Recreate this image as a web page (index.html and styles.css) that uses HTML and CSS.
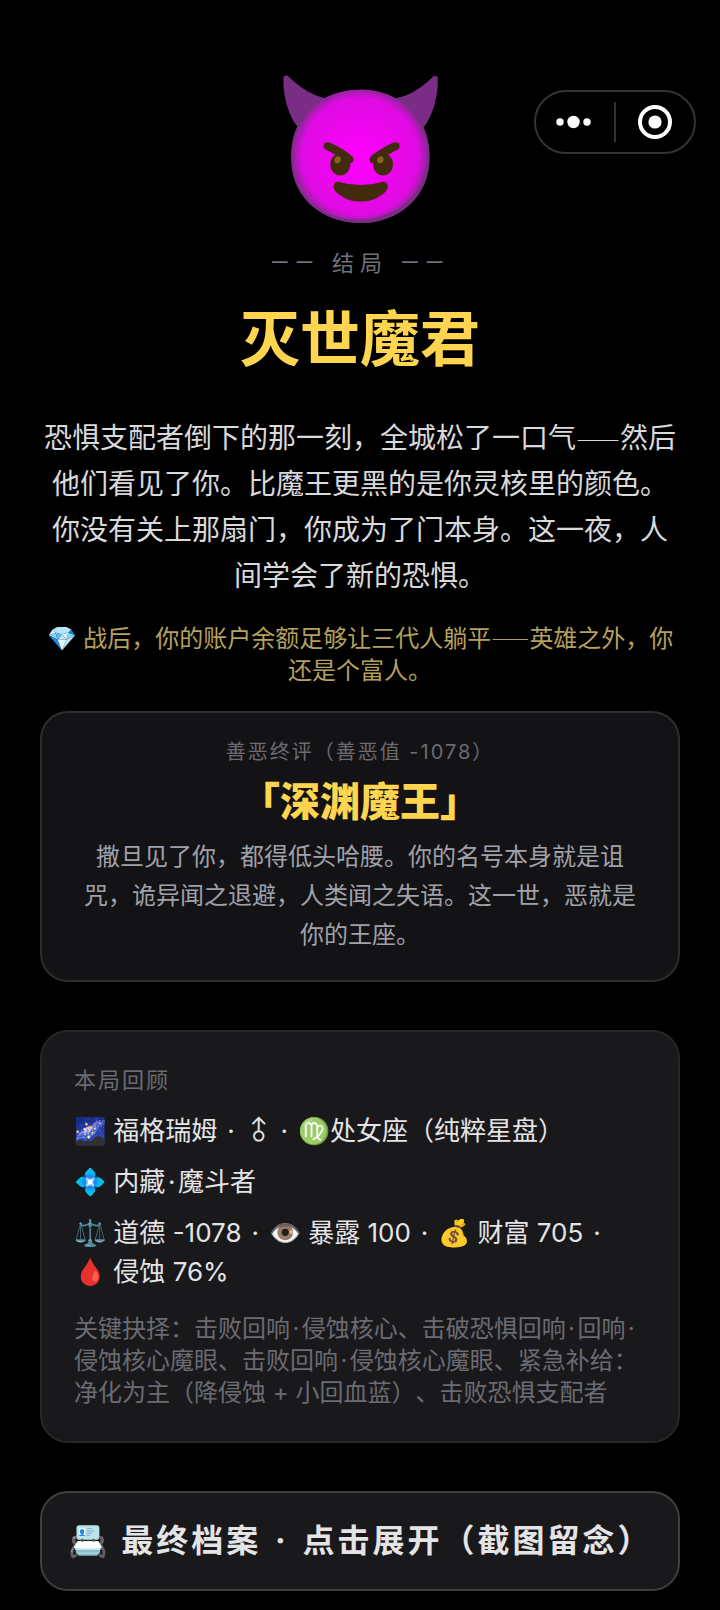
FILE: index.html
```
<!DOCTYPE html>
<html lang="zh-CN">
<head>
<meta charset="utf-8">
<meta name="viewport" content="width=device-width, initial-scale=1">
<title>灭世魔君</title>
<link rel="stylesheet" href="styles.css">
</head>
<body>
<nav class="capsule" aria-label="小程序">
  <button class="capsule-btn" type="button" aria-label="更多">
    <svg width="40" height="36" viewBox="0 0 40 36" fill="#fff"><circle cx="5" cy="18" r="3.7"/><circle cx="18.5" cy="18" r="6.2"/><circle cx="32" cy="18" r="3.7"/></svg>
  </button>
  <button class="capsule-btn" type="button" aria-label="关闭">
    <svg width="36" height="36" viewBox="0 0 36 36"><circle cx="18" cy="18" r="15" fill="none" stroke="#fff" stroke-width="4"/><circle cx="18" cy="18" r="6.6" fill="#fff"/></svg>
  </button>
</nav>
<main class="page">
  <div class="hero">😈</div>
  <p class="kicker"><span class="rule">——</span> 结局 <span class="rule">——</span></p>
  <h1 class="title">灭世魔君</h1>
  <p class="story">恐惧支配者倒下的那一刻，全城松了一口气<span class="dash">——</span>然后他们看见了你。比魔王更黑的是你灵核里的颜色。你没有关上那扇门，你成为了门本身。这一夜，人间学会了新的恐惧。</p>
  <p class="wealth">💎 战后，你的账户余额足够让三代人躺平<span class="dash">——</span>英雄之外，你还是个富人。</p>
  <section class="card verdict">
    <p class="verdict-label">善恶终评（善恶值 -1078）</p>
    <h2 class="verdict-title">「深渊魔王」</h2>
    <p class="verdict-text">撒旦见了你，都得低头哈腰。你的名号本身就是诅咒，诡异闻之退避，人类闻之失语。这一世，恶就是你的王座。</p>
  </section>
  <section class="card review">
    <h2 class="review-label">本局回顾</h2>
    <p class="review-line">🌌 福格瑞姆 <span class="dot">·</span> <span class="sex">♂</span> <span class="dot">·</span> ♍处女座（纯粹星盘）</p>
    <p class="review-line">💠 内藏<span class="dot">·</span>魔斗者</p>
    <p class="review-line"><span class="stat">⚖️ 道德 -1078</span> <span class="dot">·</span> <span class="stat">👁️ 暴露 100</span> <span class="dot">·</span> <span class="stat">💰 财富 705</span> <span class="dot">·</span> <span class="stat">🩸 侵蚀 76%</span></p>
    <p class="choices">关键抉择：击败回响<span class="dot">·</span>侵蚀核心、击破恐惧回响<span class="dot">·</span>回响<span class="dot">·</span><wbr>侵蚀核心魔眼、击败回响<span class="dot">·</span>侵蚀核心魔眼、紧急补给：净化为主（降侵蚀 + 小回血蓝）、击败恐惧支配者</p>
  </section>
  <button class="archive" type="button">📇 最终档案 <span class="dot">·</span> 点击展开（截图留念）</button>
</main>
</body>
</html>
```
FILE: styles.css
```
* { box-sizing: border-box; }
body {
  margin: 0;
  background: #000;
  color: #e4e4e7;
  font-family: Inter, "Noto Sans CJK SC", sans-serif;
  text-spacing-trim: space-all;
}
h1, h2, p { margin: 0; font-weight: 400; }
button { font-family: inherit; color: inherit; text-spacing-trim: inherit; }
.capsule {
  position: fixed;
  z-index: 2;
  top: 90px;
  right: 24px;
  display: flex;
  width: 162px;
  height: 64px;
  padding: 10px 0;
  border: 2px solid #333;
  border-radius: 32px;
  background: #000;
}
.capsule-btn {
  display: flex;
  flex: 1;
  align-items: center;
  justify-content: center;
  padding: 0;
  border: 0;
  background: none;
}
.capsule-btn + .capsule-btn { border-left: 2px solid #333; }
.page {
  display: flex;
  flex-direction: column;
  padding: 64px 40px 16px;
  text-align: center;
}
.hero { height: 168px; font-size: 144px; line-height: 168px; }
.kicker { margin-top: 15px; color: #71717a; font-size: 22px; line-height: 32px; letter-spacing: 6px; }
.title { margin-top: 20px; color: #ffd54f; font-size: 60px; font-weight: 700; line-height: 80px; }
.story { margin-top: 36px; color: #d9d9dc; font-size: 28px; line-height: 46px; }
.wealth { margin-top: 24px; color: #b5a15d; font-size: 24px; line-height: 32px; }
.rule { font-family: Roboto, sans-serif; font-size: 24px; }
.dash { font-family: "Noto Sans CJK SC", sans-serif; font-weight: 700; }
.story .dash { font-size: 22px; }
.wealth .dash { font-size: 19px; }
.card { padding: 24px 32px; border: 2px solid #2e2e31; border-radius: 28px; }
.verdict { margin-top: 24px; background: #131315; }
.verdict-label { color: #6b6b72; font-size: 20px; line-height: 30px; letter-spacing: 2px; }
.verdict-title { margin-top: 8px; color: #ffd54f; font-size: 40px; font-weight: 900; line-height: 54px; }
.verdict-text { margin-top: 8px; margin-bottom: 2px; color: #a1a1aa; font-size: 24px; line-height: 39px; }
.review { margin-top: 48px; padding: 32px; border-color: #27272a; background: #19191b; text-align: left; }
.review-label { margin-bottom: 15px; color: #6b6b72; font-size: 22px; line-height: 32px; letter-spacing: 2px; }
.review-line { margin-bottom: 12px; font-size: 26px; line-height: 39px; }
.choices { margin-top: 22px; color: #6b6b72; font-size: 24px; line-height: 32px; }
.dot { padding: 0 0.1em; }
.stat { white-space: nowrap; }
.sex { display: inline-block; width: 1em; font-family: "Noto Sans CJK SC", sans-serif; line-height: 1; text-align: center; transform: rotate(-45deg); }
.archive {
  margin-top: 48px;
  padding: 26px 20px;
  border: 2px solid #3f3f42;
  border-radius: 28px;
  background: #19191b;
  font-size: 32px;
  font-weight: 700;
  line-height: 44px;
  letter-spacing: 3px;
}
```
